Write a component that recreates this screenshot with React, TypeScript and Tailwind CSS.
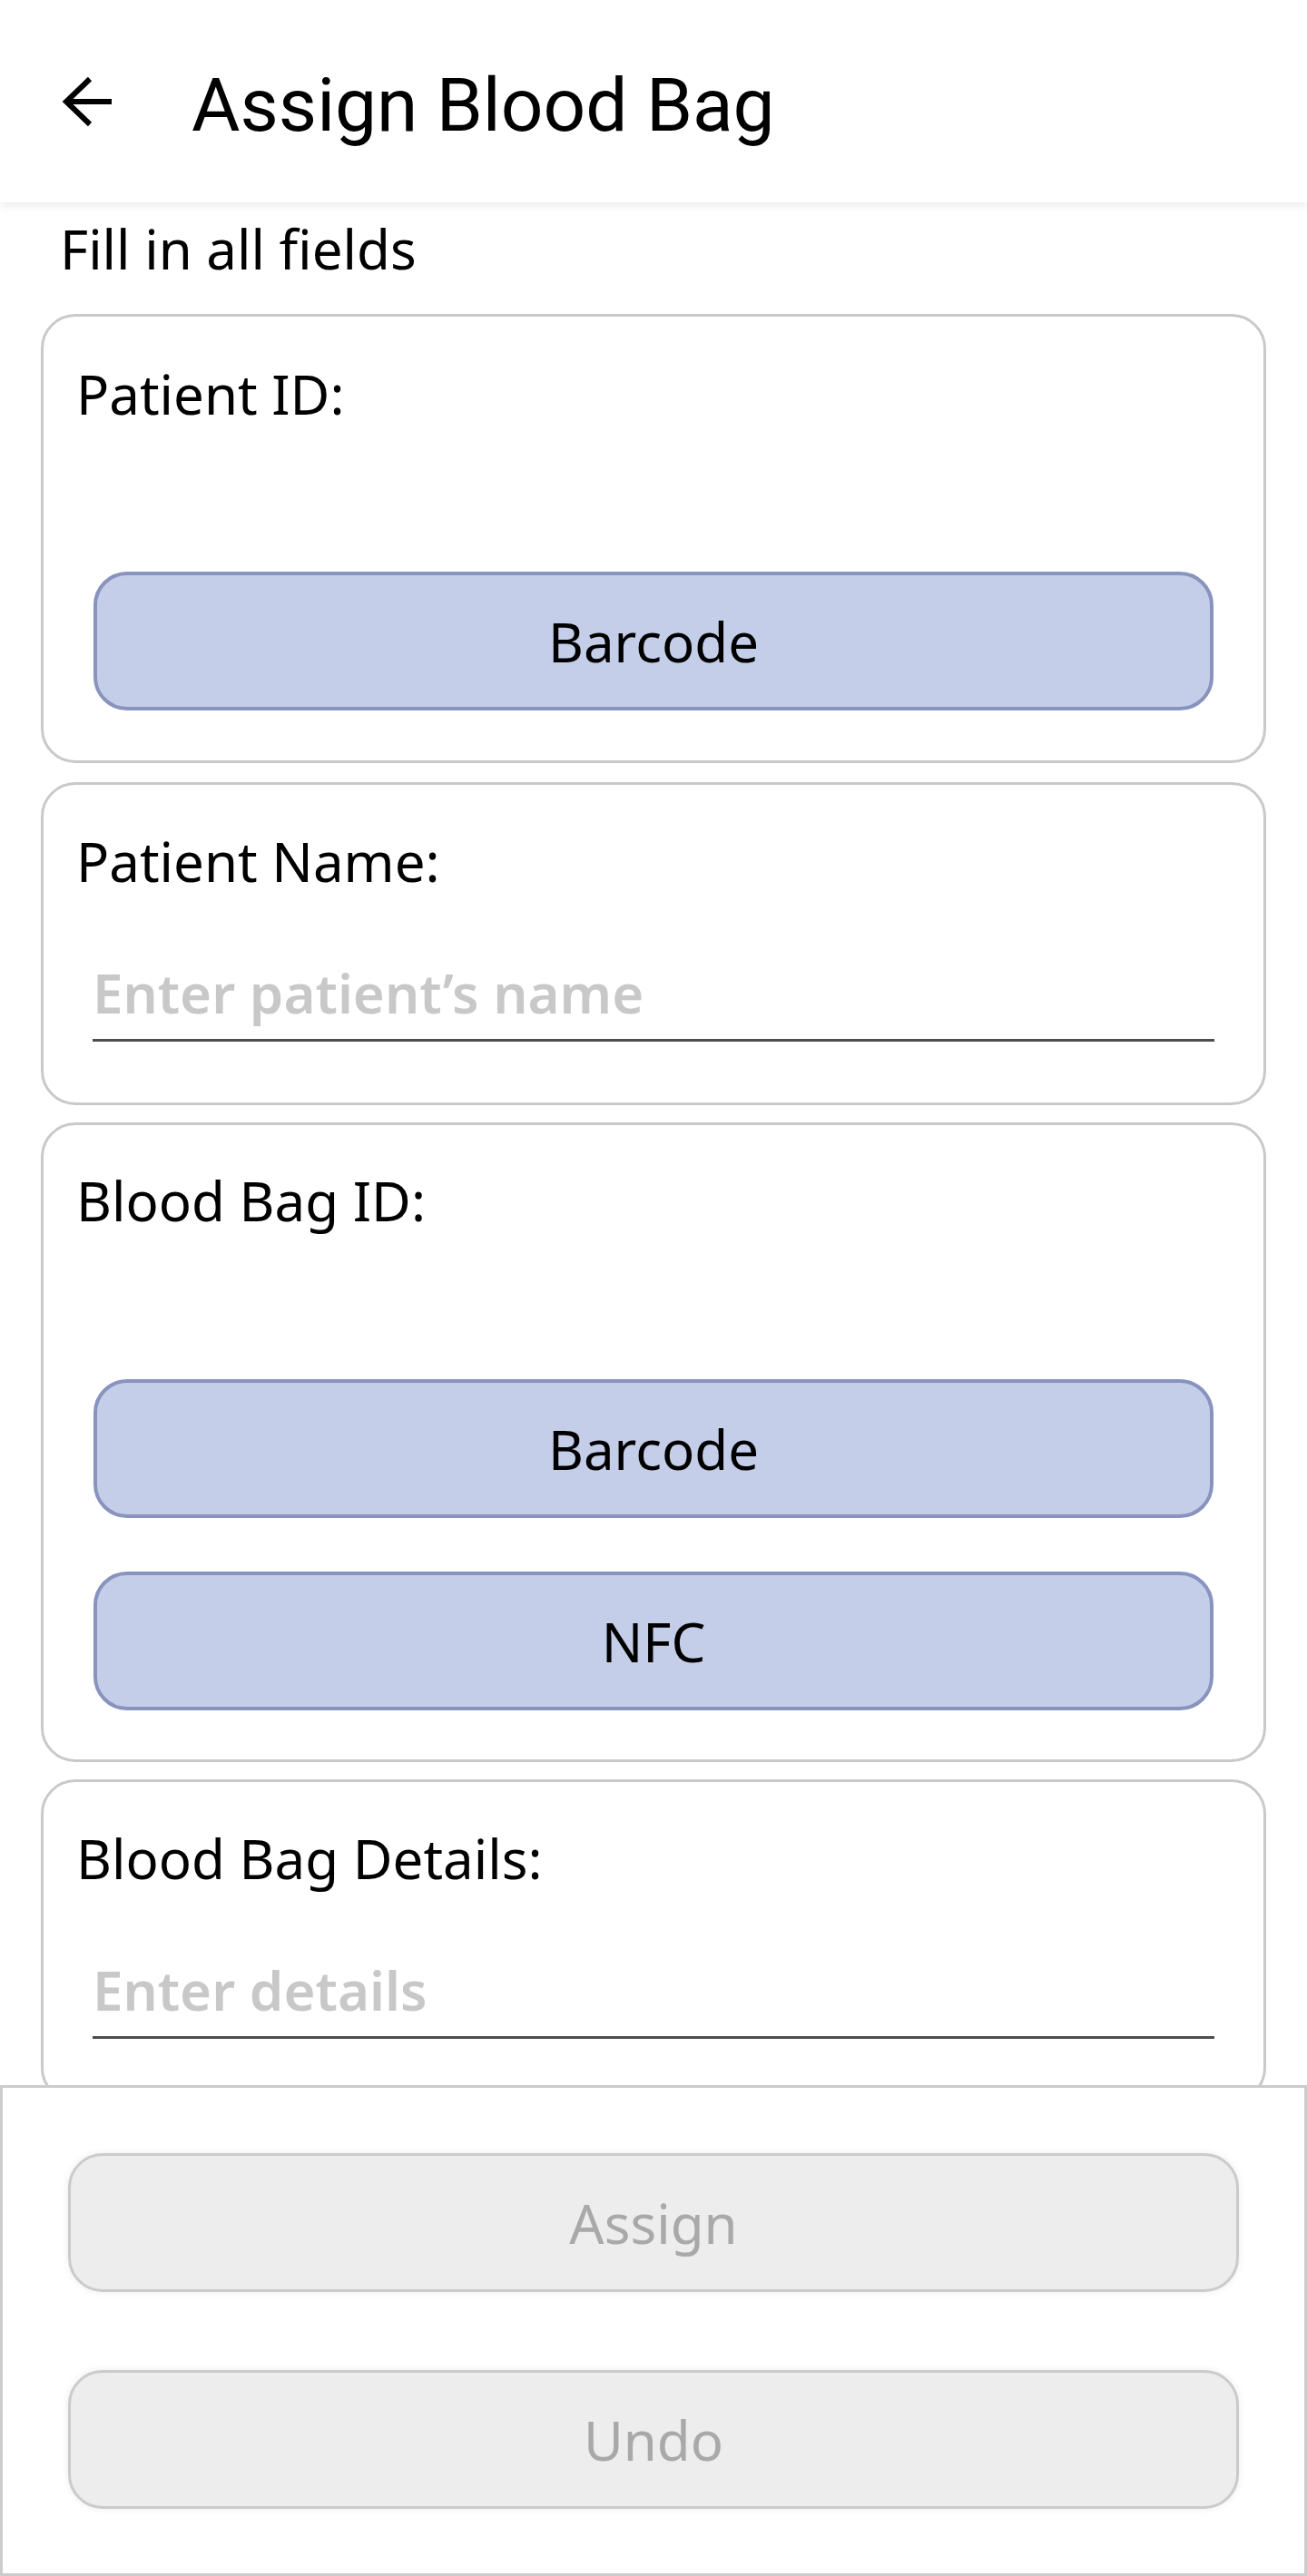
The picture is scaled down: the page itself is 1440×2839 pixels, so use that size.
import React from "react";

const font = { fontFamily: '"Noto Sans", "Open Sans", sans-serif' };

function BlueButton({ label }: { label: string }) {
  return (
    <button className="mx-[55px] flex h-[153px] items-center justify-center rounded-[37px] border-[4px] border-[#8893be] bg-[#c5cee8] text-[60px] leading-[1.2] text-black">
      {label}
    </button>
  );
}

function Card({ label, children, className = "" }: { label: string; children: React.ReactNode; className?: string }) {
  return (
    <div className={"flex flex-col rounded-[38px] border-[3px] border-[#c9c9c9] bg-white " + className}>
      <div className="pl-[36px] text-[60px] leading-[1.2] text-black">{label}</div>
      {children}
    </div>
  );
}

function TextField({ placeholder }: { placeholder: string }) {
  return (
    <div className="mx-[54px] border-b-[3px] border-[#4d4d4d]">
      <input
        className="block h-[85px] w-full bg-transparent pb-[18px] text-[60px] font-semibold leading-[1.2] text-black outline-none placeholder:text-[#c8c8c8]"
        placeholder={placeholder}
      />
    </div>
  );
}

function GrayButton({ label }: { label: string }) {
  return (
    <button className="flex h-[153px] items-center justify-center rounded-[38px] border-[3px] border-[#cbcbcb] bg-[#ededed] text-[60px] leading-[1.2] text-[#a9a9a9] shadow-[0_0_8px_rgba(0,0,0,0.08)]">
      {label}
    </button>
  );
}

export default function App() {
  return (
    <div className="flex h-[2839px] w-[1440px] flex-col overflow-hidden bg-white" style={font}>
      <header className="relative z-10 flex h-[223px] shrink-0 items-center bg-white shadow-[0_4px_10px_rgba(0,0,0,0.08)]">
        <svg className="ml-[64px] h-[60px] w-[60px]" viewBox="0 0 60 60" fill="none" stroke="#000" strokeWidth="6">
          <path d="M9 30 H59" />
          <path d="M35 5 L9 30 L35 55" strokeLinejoin="miter" />
        </svg>
        <h1
          className="ml-[87px] mt-[9px] text-[82px] font-normal leading-none text-black"
          style={{ fontFamily: 'Roboto, "Noto Sans", sans-serif' }}
        >
          Assign Blood Bag
        </h1>
      </header>

      <main className="flex flex-1 flex-col overflow-hidden px-[45px]">
        <p className="mt-[15px] pl-[21px] text-[60px] leading-[1.2] text-black">Fill in all fields</p>

        <Card label="Patient ID:" className="mt-[36px] pb-[55px] pt-[49px]">
          <div className="h-[160px]" />
          <BlueButton label="Barcode" />
        </Card>

        <Card label="Patient Name:" className="mt-[21px] pb-[67px] pt-[48px]">
          <div className="h-[75px]" />
          <TextField placeholder="Enter patient’s name" />
        </Card>

        <Card label="Blood Bag ID:" className="mt-[19px] pb-[54px] pt-[47px]">
          <div className="h-[161px]" />
          <div className="flex flex-col gap-[59px]">
            <BlueButton label="Barcode" />
            <BlueButton label="NFC" />
          </div>
        </Card>

        <Card label="Blood Bag Details:" className="mt-[19px] shrink-0 pb-[67px] pt-[48px]">
          <div className="h-[75px]" />
          <TextField placeholder="Enter details" />
        </Card>
      </main>

      <footer className="flex h-[541px] shrink-0 flex-col gap-[86px] border-[3px] border-[#cccccc] bg-white px-[72px] pt-[72px]">
        <GrayButton label="Assign" />
        <GrayButton label="Undo" />
      </footer>
    </div>
  );
}
